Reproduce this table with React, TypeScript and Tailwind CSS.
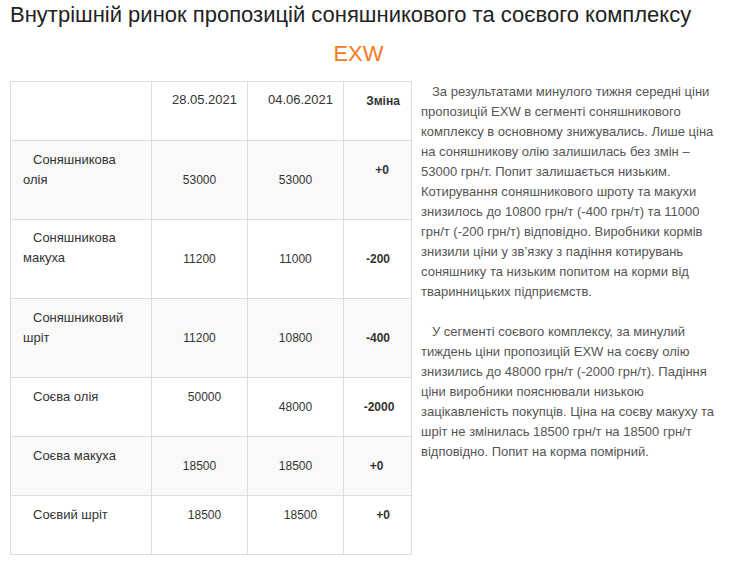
import React from "react";

type Cell = { t: React.ReactNode; cls: string };

const F = { fontFamily: '"Liberation Sans", Arial, sans-serif' };

export default function App() {
  const rows: { h: string; bg: string; cells: Cell[] }[] = [
    {
      h: "h-[79px]",
      bg: "bg-[#f9f9f9]",
      cells: [
        { t: <>Соняшникова<br />олія</>, cls: "pt-[9px] pl-[12px] pr-2 text-left indent-[10px] text-[13px]" },
        { t: "53000", cls: "pt-[29px] text-center text-[12px]" },
        { t: "53000", cls: "pt-[29px] text-center text-[12px]" },
        { t: "+0", cls: "pt-[19px] pl-[9px] text-center font-bold text-[12px]" },
      ],
    },
    {
      h: "h-[79px]",
      bg: "bg-white",
      cells: [
        { t: <>Соняшникова<br />макуха</>, cls: "pt-[8px] pl-[12px] pr-2 text-left indent-[10px] text-[13px]" },
        { t: "11200", cls: "pt-[29px] text-center text-[12px]" },
        { t: "11000", cls: "pt-[29px] text-center text-[12px]" },
        { t: "-200", cls: "pt-[29px] pl-[1px] text-center font-bold text-[12px]" },
      ],
    },
    {
      h: "h-[79px]",
      bg: "bg-[#f9f9f9]",
      cells: [
        { t: <>Соняшниковий<br />шріт</>, cls: "pt-[9px] pl-[12px] pr-2 text-left indent-[10px] text-[13px]" },
        { t: "11200", cls: "pt-[29px] text-center text-[12px]" },
        { t: "10800", cls: "pt-[29px] text-center text-[12px]" },
        { t: "-400", cls: "pt-[29px] pl-[1px] text-center font-bold text-[12px]" },
      ],
    },
    {
      h: "h-[59px]",
      bg: "bg-white",
      cells: [
        { t: "Соєва олія", cls: "pt-[9px] pl-[12px] pr-2 text-left indent-[10px] text-[13px]" },
        { t: "50000", cls: "pt-[9px] pl-[10px] text-center text-[12px]" },
        { t: "48000", cls: "pt-[19px] text-center text-[12px]" },
        { t: "-2000", cls: "pt-[19px] pl-[3px] text-center font-bold text-[12px]" },
      ],
    },
    {
      h: "h-[59px]",
      bg: "bg-[#f9f9f9]",
      cells: [
        { t: "Соєва макуха", cls: "pt-[9px] pl-[12px] pr-2 text-left indent-[10px] text-[13px]" },
        { t: "18500", cls: "pt-[19px] text-center text-[12px]" },
        { t: "18500", cls: "pt-[19px] text-center text-[12px]" },
        { t: "+0", cls: "pt-[19px] pr-[2px] text-center font-bold text-[12px]" },
      ],
    },
    {
      h: "h-[59px]",
      bg: "bg-white",
      cells: [
        { t: "Соєвий шріт", cls: "pt-[9px] pl-[12px] pr-2 text-left indent-[10px] text-[13px]" },
        { t: "18500", cls: "pt-[9px] pl-[10px] text-center text-[12px]" },
        { t: "18500", cls: "pt-[9px] pl-[10px] text-center text-[12px]" },
        { t: "+0", cls: "pt-[9px] pl-[11px] text-center font-bold text-[12px]" },
      ],
    },
  ];

  return (
    <div className="w-[737px] h-[564px] bg-white overflow-hidden" style={F}>
      <h1 className="pl-[10px] pt-[2px] text-[22px] leading-[26px] font-normal text-[#222]">
        Внутрішній ринок пропозицій соняшникового та соєвого комплексу
      </h1>
      <div className="mt-[13px] pr-[20px] text-center text-[22px] leading-[26px] text-[#f47b20]">EXW</div>
      <div className="mt-[14px] flex items-start pl-[10px]">
        <table className="w-[401px] border-collapse table-fixed text-[#333] leading-[20px]">
          <colgroup>
            <col className="w-[141px]" />
            <col className="w-[96px]" />
            <col className="w-[96px]" />
            <col className="w-[68px]" />
          </colgroup>
          <tbody>
            <tr className="h-[59px] bg-white">
              <td className="border border-[#dddddd] align-top"></td>
              <td className="border border-[#dddddd] align-top pt-[8px] pl-[10px] text-center text-[13px]">28.05.2021</td>
              <td className="border border-[#dddddd] align-top pt-[8px] pl-[10px] text-center text-[13px]">04.06.2021</td>
              <td className="border border-[#dddddd] align-top pt-[9px] pl-[11px] text-center text-[12px] font-bold">Зміна</td>
            </tr>
            {rows.map((r, i) => (
              <tr key={i} className={`${r.h} ${r.bg}`}>
                {r.cells.map((c, j) => (
                  <td key={j} className={`border border-[#dddddd] align-top ${c.cls}`}>
                    {c.t}
                  </td>
                ))}
              </tr>
            ))}
          </tbody>
        </table>
        <div className="ml-[9px] mt-[1px] w-[300px] text-[13px] leading-[20px] text-[#555]">
          <p className="indent-[11px]">
            За результатами минулого тижня середні ціни пропозицій EXW в сегменті соняшникового комплексу в основному знижувались. Лише ціна на соняшникову олію залишилась без змін – 53000 грн/т. Попит залишається низьким. Котирування соняшникового шроту та макухи знизилось до 10800 грн/т (-400 грн/т) та 11000 грн/т (-200 грн/т) відповідно. Виробники кормів знизили ціни у зв’язку з падіння котирувань соняшнику та низьким попитом на корми від тваринницьких підприємств.
          </p>
          <p className="indent-[11px] mt-[20px]">
            У сегменті соєвого комплексу, за минулий тиждень ціни пропозицій EXW на соєву олію знизились до 48000 грн/т (-2000 грн/т). Падіння ціни виробники пояснювали низькою зацікавленість покупців. Ціна на соєву макуху та шріт не змінилась 18500 грн/т на 18500 грн/т відповідно. Попит на корма помірний.
          </p>
        </div>
      </div>
    </div>
  );
}
